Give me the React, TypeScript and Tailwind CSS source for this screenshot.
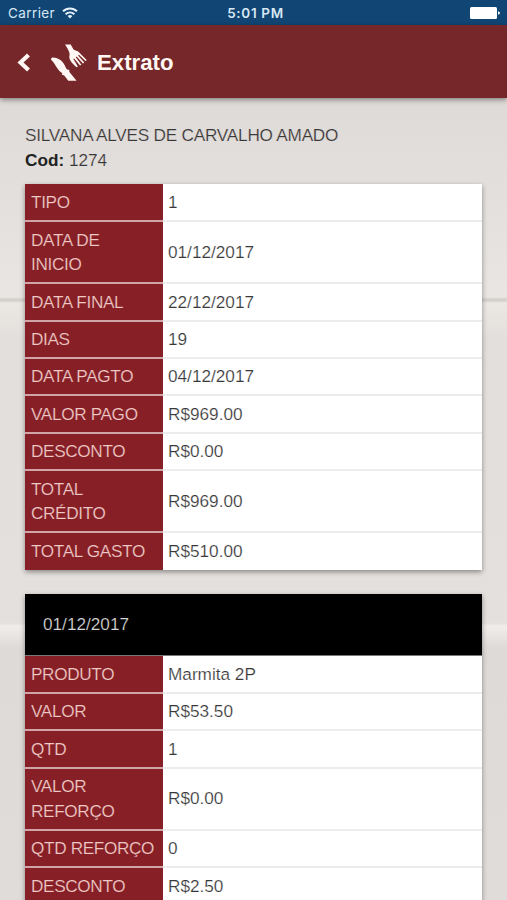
type Row = { label: string; value: string; tall?: boolean };

const summary: Row[] = [
  { label: "TIPO", value: "1" },
  { label: "DATA DE INICIO", value: "01/12/2017", tall: true },
  { label: "DATA FINAL", value: "22/12/2017" },
  { label: "DIAS", value: "19" },
  { label: "DATA PAGTO", value: "04/12/2017" },
  { label: "VALOR PAGO", value: "R$969.00" },
  { label: "DESCONTO", value: "R$0.00" },
  { label: "TOTAL CRÉDITO", value: "R$969.00", tall: true },
  { label: "TOTAL GASTO", value: "R$510.00" },
];

const order: Row[] = [
  { label: "PRODUTO", value: "Marmita 2P" },
  { label: "VALOR", value: "R$53.50" },
  { label: "QTD", value: "1" },
  { label: "VALOR REFORÇO", value: "R$0.00", tall: true },
  { label: "QTD REFORÇO", value: "0" },
  { label: "DESCONTO", value: "R$2.50" },
];

function Rows({ rows }: { rows: Row[] }) {
  return (
    <dl>
      {rows.map((row, i) => {
        const last = i === rows.length - 1;
        const height = row.tall ? "h-[62px]" : i === 0 ? "h-[38.2px]" : last ? "h-[36.6px]" : "h-[37.4px]";
        return (
          <div key={row.label} className={`flex ${height}`}>
            <dt
              className={`flex w-[138px] shrink-0 items-center bg-[#871f26] pl-1.5 tracking-[-0.35px] text-[#efc9c6] [-webkit-text-stroke:0.2px_#871f26] ${
                last ? "" : "border-b-2 border-[#cfa5a7]"
              }`}
            >
              <span className={row.tall ? "w-[100px]" : "whitespace-nowrap"}>{row.label}</span>
            </dt>
            <dd
              className={`flex flex-1 items-center bg-white pl-[5px] text-[#383838] [-webkit-text-stroke:0.2px_#fff] ${
                last ? "" : "border-b-2 border-[#ececec]"
              }`}
            >
              {row.value}
            </dd>
          </div>
        );
      })}
    </dl>
  );
}

function StatusBar() {
  return (
    <div className="grid h-[25px] shrink-0 grid-cols-3 items-center bg-[#114573] pl-2 pr-[7px] pt-[3px] font-['Inter',sans-serif] text-[13.5px] leading-none text-[#d7e8f5]">
      <div className="flex items-center gap-[7px]">
        <span className="tracking-[0.4px]">Carrier</span>
        <svg className="-mt-0.5" width="16" height="12" viewBox="0 0 16 12" fill="none" stroke="#e4f1fa" strokeWidth="2">
          <path d="M1 4.3C5 .4 11 .4 15 4.3" />
          <path d="M3.6 7.2c2.6-2.4 6.2-2.4 8.800 0" />
          <path d="M8 11.5 5.6 9a3.6 3.6 0 0 1 4.8 0z" fill="#e4f1fa" stroke="none" />
        </svg>
      </div>
      <span className="pl-[3px] text-center font-semibold tracking-[0.65px]">5:01 PM</span>
      <svg className="-mt-0.5 justify-self-end" width="30" height="12" viewBox="0 0 30 12" fill="#fff">
        <rect width="27" height="12" rx="1.5" />
        <path d="M28 4.3q2 .4 2 1.700t-2 1.700z" />
      </svg>
    </div>
  );
}

function Logo() {
  return (
    <svg width="36" height="37" viewBox="0 0 36 37" fill="#fff7f3">
      <path d="M0 14.8C.8 13 3.5 13.5 6 14.200c4.500 1.500 7 5.100 8.400 8.500.5 1.500 1.300 2.500 2.600 3.200l1.200-.4.2 2.500 7.200 8.800h-8.300L13 31.200l-2.300-.4.7-1.500C6.500 26.500 4.500 20.500 1.500 17.300.5 16.400 0 15.700 0 14.8z" />
      <path d="M14 .5h5.700l2.700 4.700c1 1.300 3.300 1.200 5.100 2.500l8.300 8.500-1.300.9-6.600-6.400-.8.700 6.200 7.100-1.300 1-6.400-7-.8.700 5.600 7.500-1.400.9-5.900-7.200-.8.600 4.600 7.500-1.300.8c-3-2.700-6.500-5.500-7.200-9.200-.3-1.700.4-2.800.2-4.300C18.300 7 15.500 3 14 .5z" />
    </svg>
  );
}

export default function App() {
  return (
    <div className="flex h-[900px] w-[507px] flex-col overflow-hidden bg-[#e2dedc] font-['Liberation_Sans',Arial,sans-serif] text-[17.2px] leading-[24.5px]">
      <StatusBar />
      <header className="relative flex h-[73px] shrink-0 items-center bg-[#752729] pl-[17px] shadow-[0_2px_5px_rgba(0,0,0,0.4)]">
        <svg className="mt-0.5" width="13" height="19" viewBox="0 0 13 19" fill="none" stroke="#fff7f3" strokeWidth="4.2">
          <path d="M11.5 2 3.500 9.500l8 7.500" />
        </svg>
        <div className="ml-[21px] pt-0.5">
          <Logo />
        </div>
        <h1 className="ml-[10px] pt-[3px] text-[22.2px] font-bold text-[#fff7f3]">Extrato</h1>
      </header>

      {/* creased paper behind the cards */}
      <main className="flex-1 bg-[linear-gradient(to_bottom,#dedad7_0,#e8e5e2_199px,#cfcbc6_202px,#ebe8e3_205px,#e3dfdd_240px,#e4e0de_525px,#f0edeb_528px,#dedad8_550px,#e0dcda_100%)] px-[25px] pt-[25px]">
        <p className="whitespace-nowrap tracking-[-0.23px] text-[#383838] [-webkit-text-stroke:0.2px_#e2dedc]">
          SILVANA ALVES DE CARVALHO AMADO
        </p>
        <p className="text-[#383838]">
          <b className="text-[#222]">Cod:</b> <span className="[-webkit-text-stroke:0.2px_#e2dedc]">1274</span>
        </p>

        <section className="mt-3 shadow-[0_2px_5px_rgba(0,0,0,0.4)]">
          <Rows rows={summary} />
        </section>

        <section className="mt-6 shadow-[0_2px_5px_rgba(0,0,0,0.4)]">
          <h2 className="flex h-[62px] items-center border-b border-[#777] bg-black pl-[18px] text-[#d5d5d5] [-webkit-text-stroke:0.2px_#000]">
            01/12/2017
          </h2>
          <Rows rows={order} />
        </section>
      </main>
    </div>
  );
}
